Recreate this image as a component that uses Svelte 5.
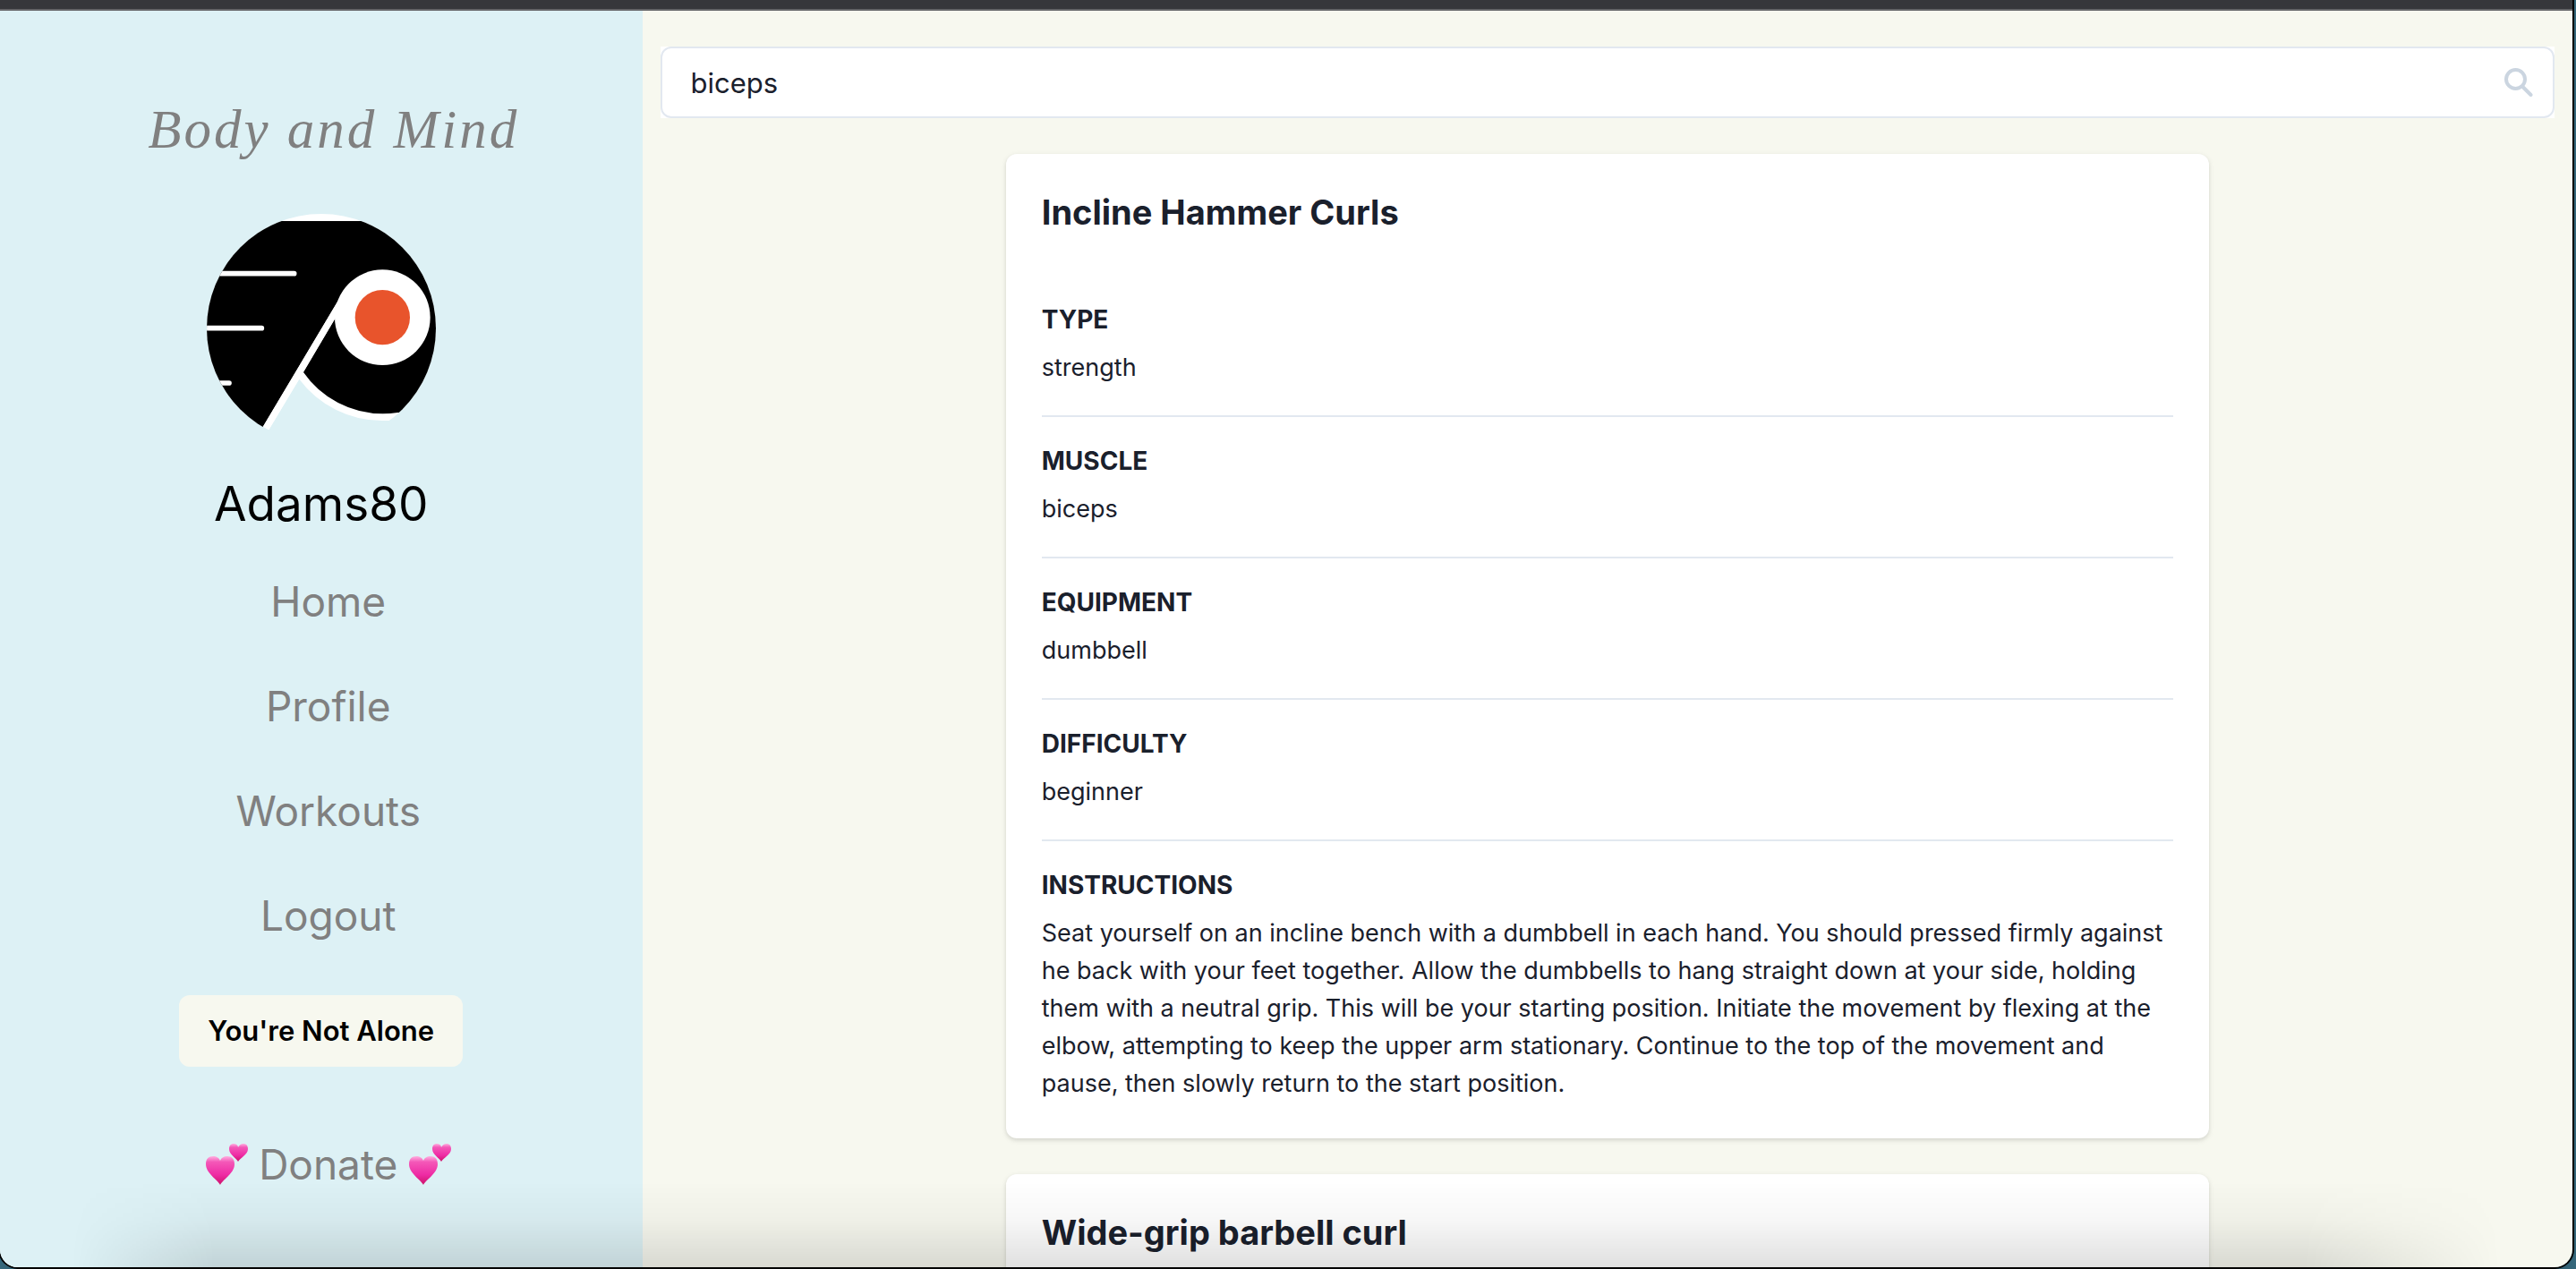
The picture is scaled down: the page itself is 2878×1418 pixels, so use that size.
<script>
  const links = ['Home', 'Profile', 'Workouts', 'Logout'];
  const exercises = [
    {
      name: 'Incline Hammer Curls',
      details: [
        ['Type', 'strength'],
        ['Muscle', 'biceps'],
        ['Equipment', 'dumbbell'],
        ['Difficulty', 'beginner'],
        [
          'Instructions',
          'Seat yourself on an incline bench with a dumbbell in each hand. You should pressed firmly against he back with your feet together. Allow the dumbbells to hang straight down at your side, holding them with a neutral grip. This will be your starting position. Initiate the movement by flexing at the elbow, attempting to keep the upper arm stationary. Continue to the top of the movement and pause, then slowly return to the start position.'
        ]
      ]
    },
    { name: 'Wide-grip barbell curl', details: [] }
  ];
  let query = $state('biceps');
</script>

{#snippet hearts()}
  <svg class="hearts" viewBox="0 0 48 48" aria-hidden="true">
    <defs>
      <linearGradient id="pink" x1="0" y1="0" x2="0" y2="1">
        <stop offset="0" stop-color="#ffb0e0" />
        <stop offset="0.2" stop-color="#f458b8" />
        <stop offset="0.65" stop-color="#ee2ba4" />
        <stop offset="1" stop-color="#cc1268" />
      </linearGradient>
    </defs>
    <path fill="url(#pink)" d="M17 47C14 41 1 34 1 24C1 18 4 15 9 15C13 15 16 17 17 20C18 17 21 15 25 15C30 15 33 18 33 24C33 34 20 41 17 47Z" />
    <path fill="url(#pink)" d="M37 21C35 17 27 13 27 7C27 3 29 1 32 1C35 1 37 3 37 5C38 3 40 1 43 1C46 1 48 3 48 7C48 13 39 17 37 21Z" />
  </svg>
{/snippet}

<div class="desktop">
  <div class="window">
    <div class="titlebar"></div>
    <div class="page">
      <aside>
        <h1>Body and Mind</h1>
        <svg class="avatar" viewBox="60 54 768 768" role="img" aria-label="Team logo">
          <defs>
            <clipPath id="round"><circle cx="444" cy="438" r="384" /></clipPath>
          </defs>
          <g clip-path="url(#round)">
            <path fill="#fff" d="M60 54H828V747H650A347 347 0 0 1 370 608L268 778L248 766L60 700Z" />
            <path d="M60 78H828V720L700 720Q675 724 650 724A324 324 0 0 1 384 585L490 405L518 315L248 768L60 822Z" />
            <path fill="#fff" d="M518 315L248 768L268 778L490 405L560 380Z" />
            <circle cx="649" cy="401" r="160" fill="#fff" />
            <circle cx="649" cy="401" r="92" fill="#e8542c" />
            <path d="M60 254H353M60 437H244M60 621H135" stroke="#fff" stroke-width="17" stroke-linecap="round" />
          </g>
        </svg>
        <p class="user">Adams80</p>
        <nav>
          {#each links as link}
            <a href="#{link.toLowerCase()}">{link}</a>
          {/each}
        </nav>
        <button type="button">You're Not Alone</button>
        <a class="donate" href="#donate">{@render hearts()}<span>Donate</span>{@render hearts()}</a>
      </aside>
      <main>
        <label class="search">
          <input type="text" aria-label="Search exercises" bind:value={query} />
          <svg viewBox="0 0 32 32" aria-hidden="true">
            <circle cx="12.500" cy="12.500" r="10.500" />
            <path d="M20.500 21L29.500 30" />
          </svg>
        </label>
        {#each exercises as exercise}
          <article>
            <h2>{exercise.name}</h2>
            <div class="details">
              {#each exercise.details as [label, text]}
                <section>
                  <h3>{label}</h3>
                  <p>{text}</p>
                </section>
              {/each}
            </div>
          </article>
        {/each}
      </main>
    </div>
    <div class="shade"></div>
  </div>
</div>

<style>
  :global(body) {
    font-family: Inter, "Liberation Sans", sans-serif;
    color: #1a202c;
  }
  h1, h2, h3, p {
    margin: 0;
  }
  a {
    color: gray;
    text-decoration: none;
  }
  .desktop {
    box-sizing: border-box;
    height: 100vh;
    padding: 0 4px 2px 0;
    background: linear-gradient(90deg, #35687c, #0c1017 6%, #0c1017 94%, #35687c);
  }
  .window {
    position: relative;
    display: flex;
    flex-direction: column;
    height: 100%;
    overflow: hidden;
    border-radius: 0 0 20px 20px;
    box-shadow: 0 0 0 2px #000;
  }
  .titlebar {
    flex: none;
    height: 10px;
    background: #36373b;
    border-bottom: 2px solid #646568;
  }
  .page {
    flex: 1;
    min-height: 0;
    display: grid;
    grid-template-columns: calc(25% - 1px) 1fr;
    background: #f7f8ef;
  }
  aside {
    display: flex;
    flex-direction: column;
    align-items: center;
    min-height: 0;
    padding-top: 97px;
    background: #ddf1f5;
  }
  h1 {
    padding-left: 28px;
    font: italic 400 61px/72px "Liberation Serif", serif;
    letter-spacing: 3px;
    color: gray;
  }
  .avatar {
    flex: none;
    width: 256px;
    height: 256px;
    margin-top: 58px;
  }
  .user {
    margin-top: 32px;
    font-size: 53px;
    line-height: 72px;
    color: #000;
  }
  nav {
    display: flex;
    flex-direction: column;
    align-items: center;
    gap: 45px;
    margin-top: 37px;
    padding-left: 16px;
    font-size: 46px;
    line-height: 72px;
  }
  button {
    height: 80px;
    margin-top: 53px;
    padding: 0 32px;
    border: 0;
    border-radius: 12px;
    background: #f7f8ef;
    font: 600 31px/48px Inter, sans-serif;
    color: #000;
  }
  .donate {
    display: flex;
    align-items: center;
    gap: 12px;
    margin-top: 73px;
    padding-left: 16px;
    font-size: 46px;
    line-height: 72px;
  }
  .hearts {
    width: 48px;
    height: 48px;
  }
  main {
    display: flex;
    flex-direction: column;
    align-items: center;
    gap: 40px;
    min-height: 0;
    overflow: hidden;
    padding: 40px 20px 0;
  }
  .search {
    flex: none;
    display: grid;
    align-items: center;
    align-self: stretch;
    background: #fff;
  }
  .search input {
    grid-area: 1 / 1;
    box-sizing: border-box;
    width: 100%;
    height: 80px;
    padding: 0 80px 0 32px;
    border: 2px solid #e2e8f0;
    border-radius: 12px;
    background: #fff;
    font: 400 31px/48px Inter, sans-serif;
    color: #1a202c;
  }
  .search svg {
    grid-area: 1 / 1;
    justify-self: end;
    width: 32px;
    height: 32px;
    margin-right: 24px;
    fill: none;
    stroke: #cbd5e0;
    stroke-width: 4;
    stroke-linecap: round;
  }
  article {
    flex: none;
    box-sizing: border-box;
    width: 1344px;
    max-width: 100%;
    padding: 40px;
    border-radius: 12px;
    background: #fff;
    box-shadow: 0 2px 6px rgba(0, 0, 0, 0.1), 0 2px 4px rgba(0, 0, 0, 0.06);
  }
  h2 {
    font-size: 38px;
    line-height: 50px;
  }
  .details {
    margin-top: 78px;
  }
  section + section {
    margin-top: 32px;
    padding-top: 32px;
    border-top: 2px solid #e2e8f0;
  }
  h3 {
    font-size: 28px;
    line-height: 34px;
    text-transform: uppercase;
  }
  section p {
    margin-top: 16px;
    font-size: 27px;
    line-height: 42px;
  }
  .shade {
    position: absolute;
    inset: auto 0 0 0;
    height: 96px;
    pointer-events: none;
    background: linear-gradient(rgba(0, 0, 0, 0), rgba(0, 0, 0, 0.03) 45%, rgba(0, 0, 0, 0.12));
    mask-image: linear-gradient(90deg, transparent 80px, #000 240px, #000 calc(100% - 300px), transparent calc(100% - 80px));
  }
</style>
